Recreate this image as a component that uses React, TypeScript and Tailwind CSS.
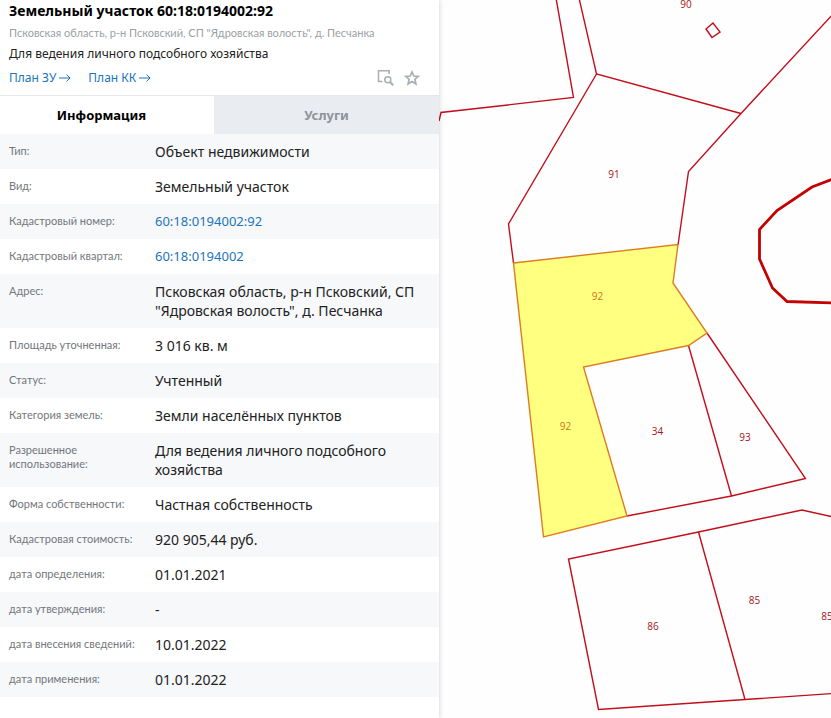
import { useState } from "react";

type Row = { label: string; value: string; link?: boolean };

const rows: Row[] = [
  { label: "Тип:", value: "Объект недвижимости" },
  { label: "Вид:", value: "Земельный участок" },
  { label: "Кадастровый номер:", value: "60:18:0194002:92", link: true },
  { label: "Кадастровый квартал:", value: "60:18:0194002", link: true },
  { label: "Адрес:", value: "Псковская область, р-н Псковский, СП \"Ядровская волость\", д. Песчанка" },
  { label: "Площадь уточненная:", value: "3 016 кв. м" },
  { label: "Статус:", value: "Учтенный" },
  { label: "Категория земель:", value: "Земли населённых пунктов" },
  { label: "Разрешенное использование:", value: "Для ведения личного подсобного хозяйства" },
  { label: "Форма собственности:", value: "Частная собственность" },
  { label: "Кадастровая стоимость:", value: "920 905,44 руб." },
  { label: "дата определения:", value: "01.01.2021" },
  { label: "дата утверждения:", value: "-" },
  { label: "дата внесения сведений:", value: "10.01.2022" },
  { label: "дата применения:", value: "01.01.2022" },
];

function Arrow() {
  return (
    <svg viewBox="0 0 12 10" className="h-[10px] w-3" fill="none" stroke="currentColor" aria-hidden="true">
      <path d="M0 5H11M7.5 1.5L11 5L7.5 8.5" />
    </svg>
  );
}

function PlanLink({ text }: { text: string }) {
  return (
    <a href="#plan" className="flex items-center gap-[3px] text-[#1b75bb]">
      {text}
      <Arrow />
    </a>
  );
}

function Header() {
  return (
    <header className="border-b border-[#e3e7eb] px-[9px] pb-[7px]">
      <h1 className="text-sm leading-[22px] font-bold text-black">Земельный участок 60:18:0194002:92</h1>
      <p className="font-[Lato,'Noto_Sans',sans-serif] text-[11px] leading-[22px] text-[#9a9fa4]">
        Псковская область, р-н Псковский, СП "Ядровская волость", д. Песчанка
      </p>
      <p className="text-xs leading-5 text-[#222]">Для ведения личного подсобного хозяйства</p>
      <div className="flex items-center justify-between pt-1 pr-[10px]">
        <nav className="flex gap-[17px] text-xs leading-5">
          <PlanLink text="План ЗУ" />
          <PlanLink text="План КК" />
        </nav>
        <div className="flex h-5 items-center gap-[10px] text-[#a9aeb3]">
          <button type="button" aria-label="Показать на карте">
            <svg viewBox="0 0 17 16" className="h-4 w-[17px]" fill="none" stroke="currentColor" strokeWidth="1.5">
              <path d="M5.500 11.500H1.500V.8H12.200V4" />
              <circle cx="10.800" cy="9.800" r="3" />
              <path d="M13 12L16.200 15.200" strokeWidth="2" />
            </svg>
          </button>
          <button type="button" aria-label="В избранное">
            <svg viewBox="0 0 16 16" className="size-4" fill="none" stroke="currentColor" strokeWidth="1.7">
              <path d="M8 2L9.800 6L14.200 6.400L10.900 9.300L11.900 13.900L8 11.500L4.100 13.900L5.100 9.300L1.800 6.400L6.200 6Z" />
            </svg>
          </button>
        </div>
      </div>
    </header>
  );
}

function ParcelMap() {
  return (
    <svg
      viewBox="439 0 392 718"
      preserveAspectRatio="xMidYMid slice"
      className="min-w-0 flex-1 bg-[#fefefe]"
      role="img"
      aria-label="Кадастровая карта"
    >
      <g fill="none" stroke="#c20e1a" strokeWidth="1.4">
        <path d="M439 121L441 112.500L573.500 97.500L556 -2" />
        <path d="M579 -2L596.500 74L741 113.500" />
        <path d="M596.500 74L508.500 224L513.500 263" />
        <path d="M833 14L741 113.500L688.500 171.500L678 245" />
        <path d="M706 29L713 23L720 32L712 37.500Z" />
        <path d="M707 333L805.500 478.500L731.500 496L627 516" />
        <path d="M688.500 345.500L731.500 496" />
        <path d="M833 517L802 510L698.500 532L568.500 559L598.500 709.500L745 699.500L833 693.500" />
        <path d="M698.500 532L745 699.500" />
      </g>
      <path
        d="M833 179L812 187L777 210.500L759.500 229.500V259L772.500 288L787 301.500L833 303"
        fill="none"
        stroke="#c40000"
        strokeWidth="2.800"
      />
      <path
        d="M513.500 263L678 244.500L673 283L707 333L688.500 345.500L583.500 367L627 516L543.500 537Z"
        fill="#ffff80"
        stroke="#dc7d20"
        strokeWidth="1.4"
      />
      <g fill="#a81418" textAnchor="middle" className="font-['Open_Sans','Noto_Sans',sans-serif] text-[10px]">
        <text x="686" y="8">90</text>
        <text x="614" y="178">91</text>
        <text x="657.500" y="435">34</text>
        <text x="745" y="441">93</text>
        <text x="754.500" y="604">85</text>
        <text x="827" y="620">85</text>
        <text x="653" y="630">86</text>
        <g fill="#cb751b">
          <text x="597.500" y="300">92</text>
          <text x="565.500" y="430">92</text>
        </g>
      </g>
    </svg>
  );
}

export default function App() {
  const [tab, setTab] = useState("info");
  const active = "bg-white text-black";
  const idle = "bg-[#e9ecf1] text-[#8d939b]";
  return (
    <div className="flex min-h-screen overflow-hidden bg-white font-['Noto_Sans','Open_Sans',sans-serif]">
      <aside className="z-10 w-[439px] shrink-0 bg-white shadow-[0_0_5px_rgba(0,0,0,0.2)]">
        <Header />
        <div role="tablist" className="flex text-[13px] leading-[38px] font-bold">
          <button
            type="button"
            role="tab"
            aria-selected={tab === "info"}
            onClick={() => setTab("info")}
            className={`w-[214px] pr-[11px] ${tab === "info" ? active : idle}`}
          >
            Информация
          </button>
          <button
            type="button"
            role="tab"
            aria-selected={tab === "services"}
            onClick={() => setTab("services")}
            className={`flex-1 ${tab === "services" ? active : idle}`}
          >
            Услуги
          </button>
        </div>
        <table className="w-full table-fixed border-collapse">
          <colgroup>
            <col className="w-[155px]" />
            <col />
          </colgroup>
          <tbody>
            {rows.map((row) => (
              <tr key={row.label} className="odd:bg-[#f6f8fa]">
                <th
                  scope="row"
                  className="py-[10px] pr-4 pl-[9px] text-left align-top font-[Lato,'Noto_Sans',sans-serif] text-[11px] leading-[14px] font-normal text-[#73777b]"
                >
                  {row.label}
                </th>
                <td className="py-2 pr-5 align-top text-[14px] leading-[19px] text-[#222]">
                  {row.link ? (
                    <a href="#parcel" className="block text-[13px] text-[#1b75bb]">
                      {row.value}
                    </a>
                  ) : (
                    row.value
                  )}
                </td>
              </tr>
            ))}
          </tbody>
        </table>
      </aside>
      <ParcelMap />
    </div>
  );
}
